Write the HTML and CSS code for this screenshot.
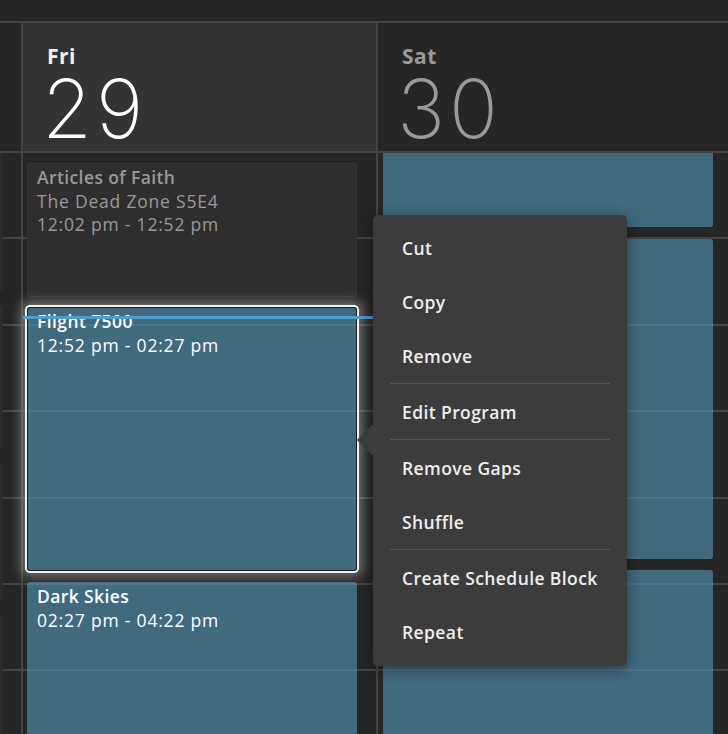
FILE: index.html
```
<!DOCTYPE html>
<html lang="en">
<head>
    <meta charset="UTF-8">
    <meta name="viewport" content="width=device-width, initial-scale=1.0">
    <title>Schedule</title>
    <link rel="stylesheet" href="styles.css">
</head>
<body>
    <div class="topbar"></div>
    <div class="calendar">
        <!-- previous day, mostly off screen -->
        <div class="day day-prev">
            <div class="day-head"></div>
            <div class="day-body">
                <div class="ghost" style="height:138px"></div>
                <div class="ghost" style="height:145px"></div>
                <div class="ghost" style="height:138px"></div>
                <div class="ghost" style="height:120px"></div>
            </div>
        </div>

        <div class="day day-today">
            <div class="day-head">
                <div class="day-name">Fri</div>
                <div class="day-num">29</div>
            </div>
            <div class="day-body">
                <div class="program program-past articles">
                    <div class="program-title">Articles of Faith</div>
                    <div>The Dead Zone S5E4</div>
                    <div>12:02 pm - 12:52 pm</div>
                </div>
                <div class="program selected flight">
                    <div class="program-title">Flight 7500</div>
                    <div>12:52 pm - 02:27 pm</div>
                </div>
                <div class="program dark-skies">
                    <div class="program-title">Dark Skies</div>
                    <div>02:27 pm - 04:22 pm</div>
                </div>
            </div>
        </div>

        <div class="day day-next">
            <div class="day-head">
                <div class="day-name">Sat</div>
                <div class="day-num">30</div>
            </div>
            <div class="day-body">
                <div class="program sat-1"></div>
                <div class="program sat-2"></div>
                <div class="program sat-3"></div>
            </div>
        </div>
    </div>

    <div class="now-line"></div>

    <div class="context-menu">
        <div class="menu-item">Cut</div>
        <div class="menu-item">Copy</div>
        <div class="menu-item">Remove</div>
        <div class="menu-sep"></div>
        <div class="menu-item">Edit Program</div>
        <div class="menu-sep"></div>
        <div class="menu-item">Remove Gaps</div>
        <div class="menu-item">Shuffle</div>
        <div class="menu-sep"></div>
        <div class="menu-item">Create Schedule Block</div>
        <div class="menu-item">Repeat</div>
    </div>
</body>
</html>
```
FILE: styles.css
```
:root {
    --clr-bg: #262626;
    --clr-line: #444444;
    --hour: 86.4px;
}
body, html {
    background-color: var(--clr-bg);
    font-family: 'Open Sans', 'Lato', sans-serif;
    margin: 0;
    padding: 0;
    height: 100%;
    overflow: hidden;
}
body {
    position: relative;
}

.topbar {
    height: 21px;
    border-bottom: 2px solid var(--clr-line);
}

.calendar {
    display: grid;
    grid-template-columns: 21px 355px 355px;
    height: 711px;
}

.day {
    display: flex;
    flex-direction: column;
    border-left: 2px solid var(--clr-line);
}
.day-prev {
    border-left: none;
}

.day-head {
    height: 130px;
    flex: 0 0 130px;
    box-sizing: border-box;
    padding: 20px 0 0 24px;
    border-bottom: 2px solid var(--clr-line);
}
.day-today .day-head {
    background-color: #333333;
}

.day-name {
    font-size: 21px;
    line-height: 26px;
    font-weight: 700;
    letter-spacing: 0.5px;
    color: #f0f0f0;
}
.day-num {
    font-family: 'Inter', 'Lato', sans-serif;
    font-size: 81px;
    line-height: 70px;
    font-weight: 200;
    letter-spacing: 4px;
    margin: 5px 0 0 -5px;
    color: #ffffff;
}
.day-next .day-name,
.day-next .day-num {
    color: #9a9a9a;
}

.day-body {
    flex: 1;
    display: flex;
    flex-direction: column;
    background-image: repeating-linear-gradient(to bottom,
        transparent 0, transparent 84.4px,
        var(--clr-line) 84.4px, var(--clr-line) var(--hour));
}

.ghost {
    flex: 0 0 auto;
    width: 3px;
    margin-bottom: 14px;
    background-color: #2c2c2c;
    border-radius: 0 3px 3px 0;
}

/* program blocks */
.program {
    box-sizing: border-box;
    width: 330px;
    margin-left: 4px;
    padding: 2px 9px;
    border-radius: 3px;
    border: 1px solid transparent;
    background-color: rgba(80, 148, 180, 0.62);
    color: #ffffff;
    font-size: 17.5px;
    line-height: 23.5px;
    letter-spacing: 0.8px;
    flex: 0 0 auto;
}
.program-title {
    font-weight: 600;
    letter-spacing: 0.4px;
}
.program-past {
    background-color: #2e2e2e;
    border-color: #363636;
    color: #9a9a9a;
}

.articles {
    margin-top: 10px;
    height: 134px;
}
.flight {
    margin-top: 10px;
    height: 264px;
}
.dark-skies {
    margin-top: 11px;
    flex: 1;
    border-radius: 3px 3px 0 0;
}

.selected {
    border-color: #1c1c1c;
    box-shadow: 0 0 0 2px #f2f2f2, 0 0 12px 6px rgba(190, 190, 190, 0.5);
    position: relative;
    z-index: 1;
}

.sat-1 {
    margin-left: 5px;
    margin-top: 0;
    height: 74px;
    border-radius: 0 0 3px 3px;
}
.sat-2 {
    margin-left: 5px;
    margin-top: 12px;
    height: 320px;
}
.sat-3 {
    margin-left: 5px;
    margin-top: 11px;
    flex: 1;
    border-radius: 3px 3px 0 0;
}

.now-line {
    position: absolute;
    left: 23px;
    top: 316px;
    width: 360px;
    height: 3px;
    background-color: #4b9dd2;
    z-index: 2;
}

/* context menu */
.context-menu {
    position: absolute;
    left: 373px;
    top: 215px;
    width: 254px;
    box-sizing: border-box;
    padding: 6px 0 7px;
    background-color: #3c3c3c;
    border-radius: 5px;
    box-shadow: 0 3px 14px rgba(0, 0, 0, 0.45);
    z-index: 3;
}
.context-menu::before {
    content: "";
    position: absolute;
    left: -16px;
    top: 209px;
    border-top: 16px solid transparent;
    border-bottom: 16px solid transparent;
    border-right: 16px solid #3c3c3c;
}

.menu-item {
    height: 54px;
    line-height: 54px;
    padding-left: 29px;
    font-size: 17.5px;
    font-weight: 600;
    letter-spacing: 0.4px;
    color: #eeeeee;
    cursor: pointer;
}
.menu-sep {
    height: 1px;
    margin: 0 17px 1px;
    background-color: #555555;
}
```
